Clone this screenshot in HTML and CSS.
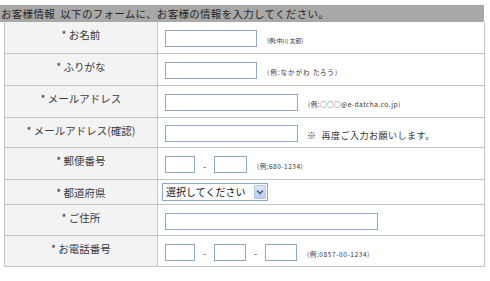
FILE: index.html
```html
<!DOCTYPE html>
<html lang="ja">
<head>
<meta charset="utf-8">
<link rel="stylesheet" href="styles.css">
</head>
<body>
<div class="wrap">
  <div class="head">お客様情報&nbsp;&nbsp;以下のフォームに、お客様の情報を入力してください。</div>
  <table class="form">
    <tr class="r32">
      <td class="label">*&nbsp;お名前</td>
      <td class="field"><div class="line"><span class="inp w92"></span><span class="hint h-name">(例:中川&nbsp;太郎)</span></div></td>
    </tr>
    <tr class="r32">
      <td class="label">*&nbsp;ふりがな</td>
      <td class="field"><div class="line"><span class="inp w92"></span><span class="hint h-kana">(例:なかがわ&nbsp;たろう)</span></div></td>
    </tr>
    <tr class="r32">
      <td class="label">*&nbsp;メールアドレス</td>
      <td class="field"><div class="line"><span class="inp w133"></span><span class="hint h-mail">(例:○○○@e-datcha.co.jp)</span></div></td>
    </tr>
    <tr class="r30">
      <td class="label">*&nbsp;メールアドレス(確認)</td>
      <td class="field"><div class="line"><span class="inp w133"></span><span class="note">※&nbsp;&nbsp;再度ご入力お願いします。</span></div></td>
    </tr>
    <tr class="r32">
      <td class="label">*&nbsp;郵便番号</td>
      <td class="field"><div class="line"><span class="inp w30"></span><span class="dash">-</span><span class="inp w33"></span><span class="hint h-zip">(例:680-1234)</span></div></td>
    </tr>
    <tr class="r25">
      <td class="label">*&nbsp;都道府県</td>
      <td class="field"><div class="line sel-line"><div class="select"><span class="sel-text">選択してください</span><span class="sel-btn"><svg width="8" height="6" viewBox="0 0 8 6"><path d="M1 1.5 L4 4.5 L7 1.5" fill="none" stroke="#4d6185" stroke-width="1.6"/></svg></span></div></div></td>
    </tr>
    <tr class="r31">
      <td class="label">*&nbsp;ご住所</td>
      <td class="field"><div class="line"><span class="inp w213"></span></div></td>
    </tr>
    <tr class="r31">
      <td class="label">*&nbsp;お電話番号</td>
      <td class="field"><div class="line"><span class="inp w30"></span><span class="dash">-</span><span class="inp w32"></span><span class="dash">-</span><span class="inp w32"></span><span class="hint h-tel">(例:0857-00-1234)</span></div></td>
    </tr>
  </table>
</div>
</body>
</html>
```
FILE: styles.css
```css
body {
  margin: 0;
  background: #ffffff;
  font-family: "Noto Sans CJK JP", "Noto Sans", sans-serif;
  color: #333333;
}
.wrap {
  width: 484px;
  padding-top: 5px;
}
.head {
  height: 17px;
  background: #a8a8a8;
  color: #262626;
  font-size: 10.5px;
  letter-spacing: 0.3px;
  line-height: 17px;
  padding-left: 1px;
  white-space: nowrap;
}
.form {
  margin-left: 4px;
  width: 481px;
  border-collapse: collapse;
  table-layout: fixed;
}
.form td {
  border: 1px solid #c4c4c4;
  padding: 0;
}
.form tr:first-child td {
  border-top: none;
}
.r32 .field { height: 31px; }
.r30 .field { height: 29px; }
.r25 .field { height: 24px; }
.r31 .field { height: 30px; }
.label {
  width: 152px;
  background: #f3f3f3;
  text-align: center;
  vertical-align: top;
  font-size: 10.5px;
  line-height: 13px;
  padding-top: 6px !important;
  color: #3a3a3a;
  white-space: nowrap;
}
.field {
  vertical-align: middle;
  padding-left: 7px !important;
}
.line {
  display: flex;
  align-items: center;
  padding-top: 2px;
}
.sel-line {
  padding-top: 0;
  margin-left: -3px;
}
.inp {
  display: block;
  height: 15px;
  border: 1px solid #8fa6c7;
  background: #ffffff;
}
.w92 { width: 90px; }
.w133 { width: 131px; }
.w30 { width: 28px; }
.w33 { width: 31px; }
.w32 { width: 30px; }
.w213 { width: 211px; }
.dash {
  width: 19px;
  text-align: center;
  font-size: 9px;
  line-height: 10px;
  padding-top: 4px;
  color: #444;
}
.hint {
  font-size: 6.5px;
  line-height: 9px;
  padding-top: 4px;
  margin-left: 10px;
  color: #333;
  white-space: nowrap;
}
.h-name { font-size: 6px; letter-spacing: -0.1px; }
.h-kana { letter-spacing: 1px; }
.h-mail { letter-spacing: 0.5px; }
.h-zip { letter-spacing: 0.5px; }
.h-tel { letter-spacing: 0.6px; }
.note {
  font-size: 9px;
  letter-spacing: 0.5px;
  line-height: 11px;
  padding-top: 4px;
  margin-left: 9px;
  color: #333;
  white-space: nowrap;
}
.select {
  display: flex;
  align-items: center;
  width: 104px;
  height: 16px;
  border: 1px solid #8fa6c7;
  background: #ffffff;
}
.sel-text {
  flex: 1;
  font-size: 10px;
  line-height: 14px;
  padding-left: 3px;
  color: #111;
  white-space: nowrap;
}
.sel-btn {
  width: 12px;
  height: 14px;
  margin-right: 1px;
  border: 1px solid #b4c6e6;
  border-radius: 1px;
  background: linear-gradient(#dfe8f8, #b7caf0);
  display: flex;
  align-items: center;
  justify-content: center;
  box-sizing: border-box;
}
```
